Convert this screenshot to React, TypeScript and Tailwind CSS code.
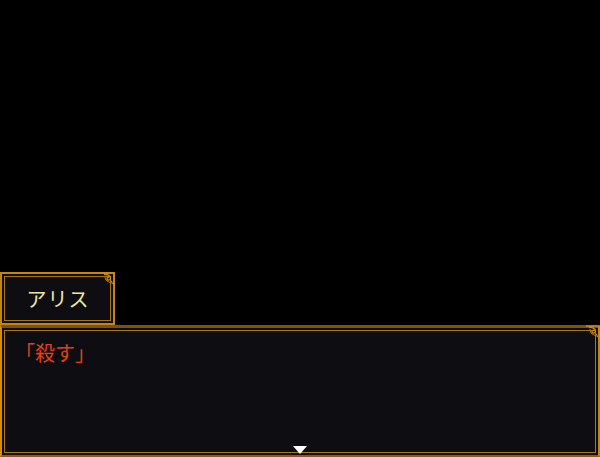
import React from "react";

function Corner({ className }: { className?: string }) {
  return (
    <svg className={className} width="14" height="14" viewBox="0 0 14 14" fill="none">
      <path d="M0 1 H12 Q13 1 13 2 V14" stroke="#d08a10" strokeWidth="1.6" />
      <path d="M3 2.5 Q7 2 9 4.5 Q10.5 7 8 8 Q6 8.5 6 6.5 Q6.5 5 8 5.5" stroke="#d08a10" strokeWidth="1.3" />
      <path d="M4 4 Q4 6 5 8 Q7 10 9.5 10.5" stroke="#b07a10" strokeWidth="1" />
      <path d="M10 9 Q11 10 11.5 12" stroke="#d08a10" strokeWidth="1.2" />
    </svg>
  );
}

export default function App() {
  return (
    <div
      className="w-[600px] h-[457px] bg-black flex flex-col overflow-hidden"
      style={{ fontFamily: '"Noto Sans CJK JP", "Noto Sans", sans-serif' }}
    >
      <div className="flex-1" />
      <div className="relative w-[115px] h-[53px] border-2 border-[#c8850e] bg-[#0e0e12] p-[2px]">
        <div className="h-full border border-[#a87510] flex items-center justify-center pl-[1px]">
          <span className="text-[20px] leading-none text-[#ede7a6] tracking-[1px]">アリス</span>
        </div>
        <Corner className="absolute top-[-2px] right-[-2px]" />
      </div>
      <div className="relative h-[132px] border-2 border-t-[3px] border-[#c8850e] border-l-[#d88c0c] border-t-[#7a5312] border-b-[#8a5e12] bg-[#0e0e12] p-[2px]">
        <div className="h-full border border-[#a87510] pl-[10px] pt-[11px]">
          <span className="text-[20px] leading-none text-[#e0401a]">「殺す」</span>
        </div>
        <Corner className="absolute top-[-3px] right-[-2px]" />
        <div className="absolute left-[291px] bottom-[1px] w-0 h-0 border-l-[7px] border-r-[7px] border-t-[8px] border-l-transparent border-r-transparent border-t-white" />
      </div>
    </div>
  );
}
